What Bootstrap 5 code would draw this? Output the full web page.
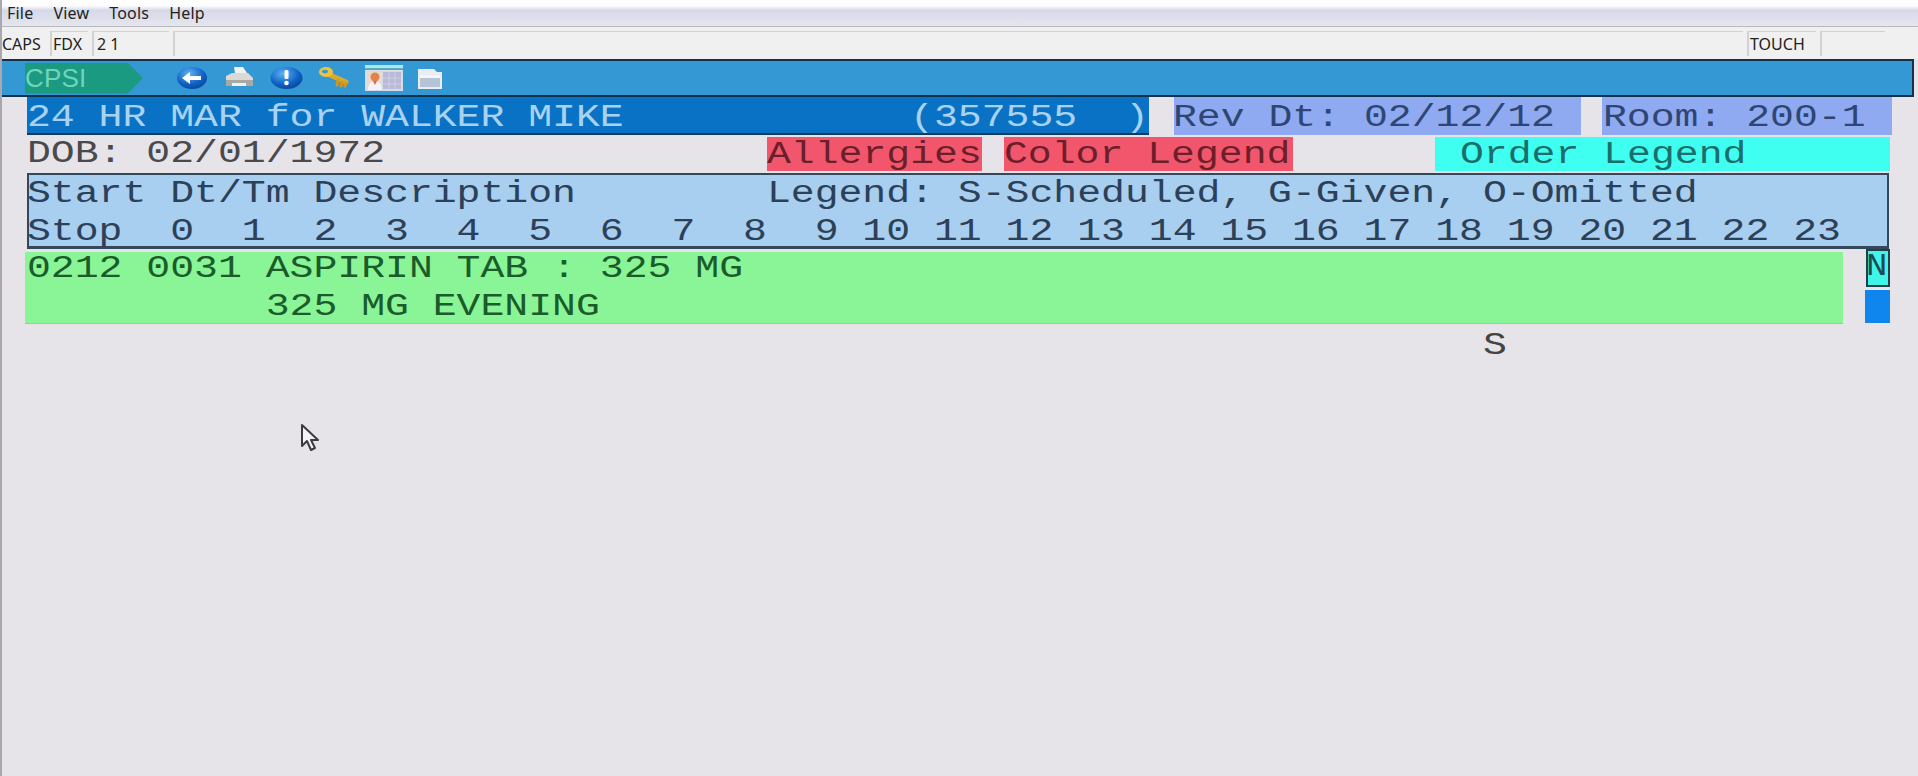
<!DOCTYPE html>
<html lang="en">
<head>
<meta charset="utf-8">
<title>24 HR MAR</title>
<link href="https://cdn.jsdelivr.net/npm/bootstrap@5.3.0/dist/css/bootstrap.min.css" rel="stylesheet">
<style>
html,body{height:100%;}
body{background:#e6e4e8;overflow:hidden;position:relative;border-left:2px solid #a9a9ad;}
.menu-strip{height:27px;margin-left:-2px;background:linear-gradient(#fff 0,#fdfdfe 6px,#d6d9e8 10px,#dfe1ec 20px,#e6e7ef 27px);border-bottom:1px solid #b9b9bc;font:16px/24px "Noto Sans",sans-serif;letter-spacing:.2px;color:#222;padding-top:1px;padding-left:7px;gap:20px;}
.status-strip{height:32px;margin-left:-2px;background:#f0f0f0;padding-top:4px;gap:4px;font:16px/24px "Noto Sans",sans-serif;color:#222;}
.pane{height:25px;border-left:2px solid #d2d2d2;border-top:1px solid #d2d2d2;padding-left:3px;white-space:nowrap;}
.p-caps{width:46px;border-color:transparent;padding-left:0;}
.p-fdx{width:38px;padding-left:1px;}
.p-num{width:77px;padding-left:3px;}
.p-wide{width:1570px;}
.p-touch{width:69px;padding-left:1px;}
.p-empty{width:65px;}
.tool-strip{height:38px;width:1914px;margin-left:-2px;background:#3498d5;border:2px solid #12324a;border-left-color:#3498d5;}
.cpsi{width:118px;height:31px;margin-left:23px;background:#1b9a82;clip-path:polygon(0 0,87% 0,100% 50%,87% 100%,0 100%);font:26px/31px "Liberation Sans",sans-serif;letter-spacing:.2px;color:#70d4bc;white-space:nowrap;}
.tool-icons{margin-left:33px;gap:15px;}
.tt{display:inline-block;font:400 31px/38px "Liberation Mono",monospace;white-space:pre;transform:scaleX(1.283);transform-origin:left top;}
.line{height:38px;}
.term{margin-left:25px;}
.r-title{height:38px;}
.r-title .tt{margin-top:2px;}
.c-title{width:1122px;height:38px;background:#0a72c4;border-bottom:2px solid #123a5a;color:#a9d2f2;}
.c-rev{width:407px;height:38px;margin-left:25px;background:#8faaf0;color:#2f4674;}
.c-rev .tt{margin-left:-1px;}
.c-room{width:290px;height:38px;margin-left:21px;background:#8faaf0;color:#2f4674;padding-left:1px;}
.r-dob{height:38px;color:#4a4a4c;}
.c-dob{width:740px;}
.c-red{height:34px;margin-top:2px;background:#f2566c;color:#6c1e2a;}
.c-red .tt{margin-top:-1px;}
.c-aller{width:215px;}
.c-color{width:289px;margin-left:22px;}
.c-order{width:455px;height:34px;margin-top:2px;margin-left:142px;background:#3ffff0;color:#1c6e6c;padding-left:25px;}
.c-order .tt{margin-top:-1px;}
.r-head{height:76px;width:1862px;background:#a8cef0;border:2px solid #34485c;border-bottom-width:3px;color:#2c4058;}
.r-head .tt{margin-left:-2px;}
.r-drug{height:74px;margin-top:2px;}
.c-green{width:1818px;height:72px;margin-left:-2px;padding-left:2px;background:#8af596;color:#1a5c2a;border-bottom:1px solid #a9c0aa;margin-top:1px;}
.c-green .line:first-child{margin-top:-2px;}
.side-marks{margin-left:23px;margin-top:-2px;gap:3px;}
.c-n{width:24px;height:38px;background:#3ff5e8;border:2px solid #20404a;color:#1f4a52;overflow:hidden;}
.c-n .tt{transform:scaleX(1.15);margin-left:-2px;margin-top:-3px;}
.c-blue{width:25px;height:33px;background:#0f86ee;margin-left:-1px;}
.r-s{color:#444;padding-left:1456px;height:38px;margin-top:2px;}
.cursor{position:absolute;left:296px;top:423px;}
.doc-icon{margin-left:-1px;}
</style>
</head>
<body>
<div class="menu-strip d-flex">
  <span>File</span><span>View</span><span>Tools</span><span>Help</span>
</div>
<div class="status-strip d-flex">
  <div class="pane p-caps">CAPS</div>
  <div class="pane p-fdx">FDX</div>
  <div class="pane p-num">2 1</div>
  <div class="pane p-wide"></div>
  <div class="pane p-touch">TOUCH</div>
  <div class="pane p-empty"></div>
</div>
<div class="tool-strip d-flex align-items-center">
  <div class="cpsi">CPSI</div>
  <div class="tool-icons d-flex align-items-center">
    <svg width="32" height="26" viewBox="0 0 32 26"><defs><radialGradient id="gb" cx=".4" cy=".3" r=".8"><stop offset="0" stop-color="#5fb4f4"/><stop offset=".6" stop-color="#0f62c4"/><stop offset="1" stop-color="#0a3f8e"/></radialGradient></defs><ellipse cx="16" cy="13" rx="15" ry="11" fill="url(#gb)"/><path d="M6 13l8-6v4h11v4H14v4z" fill="#fff"/></svg>
    <svg width="32" height="26" viewBox="0 0 32 26"><path d="M11 2h9l4 6H12z" fill="#f2f2f2"/><path d="M3 11l6-3h16l5 5v6a2 2 0 0 1-2 2H5a2 2 0 0 1-2-2z" fill="#d9d9d6"/><path d="M3 15h27v4a2 2 0 0 1-2 2H5a2 2 0 0 1-2-2z" fill="#a8a9a6"/><path d="M9 18h14v3H9z" fill="#f1f1ef"/></svg>
    <svg width="33" height="26" viewBox="0 0 33 26"><ellipse cx="16.500" cy="13" rx="16" ry="11" fill="url(#gb)"/><rect x="14.500" y="5" width="4" height="9" rx="1.500" fill="#fff"/><circle cx="16.500" cy="18" r="2.300" fill="#fff"/></svg>
    <svg width="32" height="26" viewBox="0 0 32 26"><path d="M12 10l16 7" stroke="#e2a928" stroke-width="5" stroke-linecap="round"/><path d="M20 15l-1 5M24 17l-1 4M28 18l-1 3" stroke="#d2981e" stroke-width="3" stroke-linecap="round"/><ellipse cx="8" cy="7" rx="7" ry="5" fill="#f0c23c"/><ellipse cx="7" cy="6.500" rx="3" ry="1.800" fill="#3498d5"/></svg>
    <svg width="38" height="26" viewBox="0 0 38 26"><rect width="38" height="26" fill="#d6dbe8"/><rect width="38" height="2" fill="#a6e8ee"/><rect y="3" width="38" height="2" fill="#58aab4"/><rect x="18" y="7" width="18" height="17" fill="#b8bad8"/><path d="M24 7v17M30 7v17M18 13h18M18 19h18" stroke="#cfd0e4" stroke-width="1"/><rect x="2" y="7" width="15" height="17" fill="#ecd8cc"/><circle cx="10" cy="12" r="4.500" fill="#e0844c"/><path d="M3 25c0-6 3-9 7-9s7 3 7 9z" fill="#f4f4f8"/><path d="M8 16l2 4 2-4z" fill="#d66a44"/></svg>
    <svg class="doc-icon" width="26" height="26" viewBox="0 0 26 26"><path d="M1 4h16l3 3h5v17H1z" fill="#e8edf4"/><rect x="3" y="10" width="20" height="12" fill="#b7c4d8"/><rect x="3" y="10" width="20" height="3" fill="#f4f6fa"/></svg>
  </div>
</div>
<div class="term">
  <div class="r-title d-flex">
    <div class="c-title"><span class="tt">24 HR MAR for WALKER MIKE            (357555  )</span></div>
    <div class="c-rev"><span class="tt">Rev Dt: 02/12/12</span></div>
    <div class="c-room"><span class="tt">Room: 200-1</span></div>
  </div>
  <div class="r-dob d-flex">
    <div class="c-dob"><span class="tt">DOB: 02/01/1972</span></div>
    <div class="c-red c-aller"><span class="tt">Allergies</span></div>
    <div class="c-red c-color"><span class="tt">Color Legend</span></div>
    <div class="c-order"><span class="tt">Order Legend</span></div>
  </div>
  <div class="r-head">
    <div class="line"><span class="tt">Start Dt/Tm Description        Legend: S-Scheduled, G-Given, O-Omitted</span></div>
    <div class="line"><span class="tt">Stop  0  1  2  3  4  5  6  7  8  9 10 11 12 13 14 15 16 17 18 19 20 21 22 23</span></div>
  </div>
  <div class="r-drug d-flex">
    <div class="c-green">
      <div class="line"><span class="tt">0212 0031 ASPIRIN TAB : 325 MG</span></div>
      <div class="line"><span class="tt">          325 MG EVENING</span></div>
    </div>
    <div class="side-marks d-flex flex-column">
      <div class="c-n"><span class="tt">N</span></div>
      <div class="c-blue"></div>
    </div>
  </div>
  <div class="r-s"><span class="tt">S</span></div>
</div>
<svg class="cursor" width="24" height="32" viewBox="0 0 24 32"><path d="M4 2v21l5-5 4 9 4-2-4-8h7z" fill="#f4f4f6" stroke="#3c3c40" stroke-width="2" stroke-linejoin="round"/></svg>
<script src="https://cdn.jsdelivr.net/npm/bootstrap@5.3.0/dist/js/bootstrap.bundle.min.js"></script>
</body>
</html>
